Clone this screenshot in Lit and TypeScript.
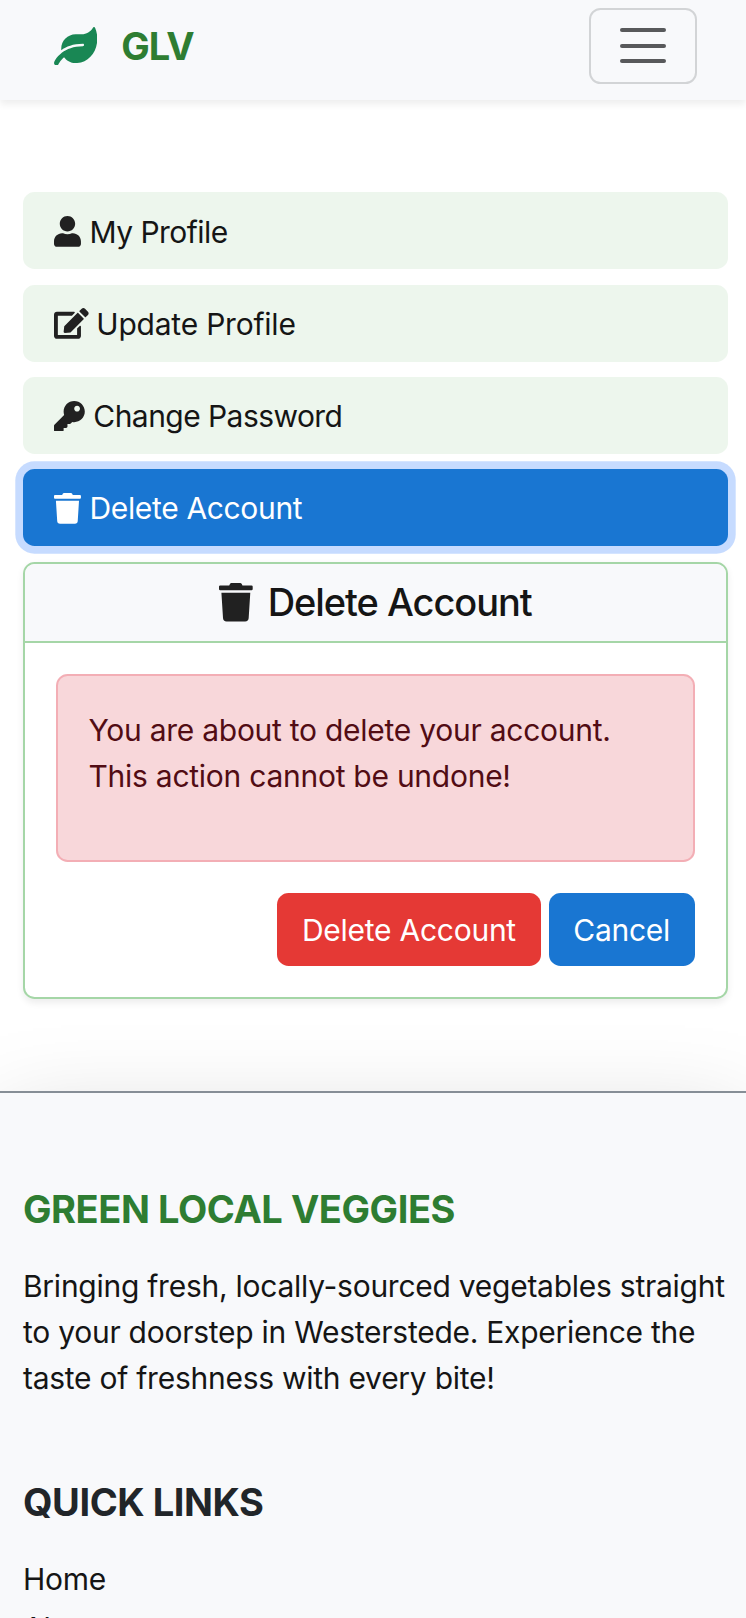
import { LitElement, html, css, svg } from "lit";
import { customElement } from "lit/decorators.js";

const ICONS: Record<string, { w: number; d: string }> = {
  leaf: {
    w: 576,
    d: "M546.2 9.7c-5.6-12.5-21.6-13-28.3-1.2C486.9 62.4 431.4 96 368 96h-80C182 96 96 182 96 288c0 7 .8 13.7 1.5 20.5C161.3 262.8 253.4 224 384 224c8.8 0 16 7.2 16 16s-7.2 16-16 16C132.6 256 26 410.1 2.4 468c-6.6 16.3 1.2 34.9 17.5 41.6 16.4 6.8 35-1.1 41.8-17.3 1.5-3.6 20.9-47.9 71.9-90.6 32.4 43.9 94 85.8 174.9 77.2C465.5 467.5 576 326.7 576 154.3c0-50.2-10.8-102.2-29.8-144.6z",
  },
  user: {
    w: 448,
    d: "M224 256c70.7 0 128-57.3 128-128S294.7 0 224 0 96 57.3 96 128s57.3 128 128 128zm89.6 32h-16.7c-22.2 10.2-46.9 16-72.9 16s-50.6-5.8-72.9-16h-16.7C60.2 288 0 348.2 0 422.4V464c0 26.5 21.5 48 48 48h352c26.5 0 48-21.5 48-48v-41.6c0-74.2-60.2-134.4-134.4-134.4z",
  },
  edit: {
    w: 576,
    d: "M402.6 83.2l90.2 90.2c3.8 3.8 3.8 10 0 13.8L274.4 405.6l-92.8 10.3c-12.4 1.4-22.9-9.1-21.5-21.5l10.3-92.8L388.8 83.2c3.8-3.8 10-3.8 13.8 0zm162-22.9l-48.8-48.8c-15.2-15.2-39.9-15.2-55.2 0l-35.4 35.4c-3.8 3.8-3.8 10 0 13.8l90.2 90.2c3.8 3.8 10 3.8 13.8 0l35.4-35.4c15.2-15.3 15.2-40 0-55.2zM384 346.2V448H64V128h229.8c3.2 0 6.2-1.3 8.5-3.5l40-40c7.6-7.6 2.2-20.5-8.5-20.5H48C21.5 64 0 85.5 0 112v352c0 26.5 21.5 48 48 48h352c26.5 0 48-21.5 48-48V306.2c0-10.7-12.9-16-20.5-8.5l-40 40c-2.2 2.3-3.5 5.3-3.5 8.5z",
  },
  key: {
    w: 512,
    d: "M512 176.001C512 273.203 433.202 352 336 352c-11.22 0-22.19-1.062-32.827-3.069l-24.012 27.014A23.999 23.999 0 0 1 261.223 384H224v40c0 13.255-10.745 24-24 24h-40v40c0 13.255-10.745 24-24 24H24c-13.255 0-24-10.745-24-24v-78.059c0-6.365 2.529-12.47 7.029-16.971l161.802-161.802C163.108 213.814 160 195.271 160 176 160 78.798 238.797.001 335.999 0 433.488-.001 512 78.511 512 176.001zM336 128c0 26.51 21.49 48 48 48s48-21.49 48-48-21.49-48-48-48-48 21.49-48 48z",
  },
  trash: {
    w: 448,
    d: "M432 32H312l-9.4-18.7A24 24 0 0 0 281.1 0H166.8a23.72 23.72 0 0 0-21.4 13.3L136 32H16A16 16 0 0 0 0 48v32a16 16 0 0 0 16 16h416a16 16 0 0 0 16-16V48a16 16 0 0 0-16-16zM53.2 467a48 48 0 0 0 47.9 45h245.8a48 48 0 0 0 47.9-45L416 128H32z",
  },
};

const icon = (name: string) => html`<svg
  class="icon"
  viewBox="0 0 ${ICONS[name].w} 512"
  aria-hidden="true"
>
  ${svg`<path fill="currentColor" d=${ICONS[name].d}></path>`}
</svg>`;

const MENU = [
  { icon: "user", label: "My Profile", cls: "profile" },
  { icon: "edit", label: "Update Profile", cls: "update" },
  { icon: "key", label: "Change Password", cls: "password" },
  { icon: "trash", label: "Delete Account", cls: "active" },
];

@customElement("app-root")
export class AppRoot extends LitElement {
  static styles = css`
    :host {
      display: block;
      height: 1618px;
      overflow: hidden;
      background: #fff;
      color: #151515;
      font-family: Inter, "Liberation Sans", sans-serif;
      font-size: 30px;
      line-height: 46.2px;
      letter-spacing: -0.26px;
    }
    * {
      box-sizing: border-box;
    }
    h2,
    h3,
    p,
    ul {
      margin: 0;
      padding: 0;
    }
    .icon {
      display: block;
      height: 30.8px;
      flex: none;
    }
    header {
      display: flex;
      justify-content: space-between;
      height: 100px;
      padding: 7.5px 49.3px 0 54px;
      background: #f8f9fb;
      box-shadow: 0 3.8px 7.7px rgba(0, 0, 0, 0.075);
    }
    .brand {
      display: flex;
      align-items: center;
      gap: 24px;
      height: 77px;
      color: #2e7d32;
      font-size: 38px;
      font-weight: 700;
      letter-spacing: -1.1px;
    }
    .brand .icon {
      height: 38.5px;
      color: #198754;
    }
    .toggler {
      display: flex;
      flex-direction: column;
      align-items: center;
      justify-content: center;
      gap: 11.6px;
      width: 107.5px;
      height: 76.5px;
      padding: 0;
      border: 2px solid #d2d4d6;
      border-radius: 11.5px;
      background: none;
    }
    .bar {
      width: 46px;
      height: 3.8px;
      border-radius: 2px;
      background: #58595b;
    }
    main {
      padding: 92.4px 18.5px 0 23.2px;
    }
    .menu {
      display: flex;
      flex-direction: column;
      gap: 15.3px;
    }
    .item {
      display: flex;
      align-items: center;
      gap: 8.5px;
      height: 77px;
      padding: 1px 30.8px 0;
      border-radius: 11.6px;
      background: #edf6ed;
    }
    .item .icon {
      color: #212121;
    }
    .profile {
      padding-top: 2px;
      letter-spacing: -0.52px;
    }
    .update {
      gap: 7.7px;
      letter-spacing: -0.22px;
    }
    .password {
      letter-spacing: -0.55px;
    }
    .item.active {
      background: #1976d2;
      color: #fff;
      letter-spacing: -0.34px;
      box-shadow: 0 0 0 7.7px #c6dbff;
    }
    .item.active .icon {
      color: #fff;
    }
    .card {
      height: 437px;
      margin-top: 15.6px;
      border: 2px solid #a5d6a7;
      border-radius: 11.6px;
      box-shadow: 0 3.8px 7.7px rgba(0, 0, 0, 0.075);
    }
    .title {
      display: flex;
      align-items: center;
      justify-content: center;
      gap: 15px;
      height: 79px;
      border-bottom: 2px solid #a5d6a7;
      border-radius: 10px 10px 0 0;
      background: #f8f9fb;
      font-size: 38px;
      font-weight: 500;
      letter-spacing: -1.05px;
    }
    .title .icon {
      height: 38.5px;
      color: #212121;
    }
    .body {
      padding: 31px 30.8px;
    }
    .alert {
      height: 188px;
      padding: 31px 30.5px;
      border: 2px solid #f3aeb5;
      border-radius: 11.6px;
      background: #f8d7da;
      color: #520c14;
    }
    .actions {
      display: flex;
      justify-content: flex-end;
      gap: 8px;
      margin-top: 31px;
    }
    .btn {
      display: flex;
      align-items: center;
      justify-content: center;
      height: 73px;
      padding: 2px 0 0;
      border: 0;
      border-radius: 11.6px;
      color: #fff;
      font: inherit;
      letter-spacing: -0.26px;
    }
    .danger {
      width: 263.5px;
      background: #e53935;
    }
    .primary {
      width: 146px;
      background: #1976d2;
    }
    footer {
      height: 540px;
      margin-top: 92px;
      padding: 93px 10px 0 23px;
      border-top: 2px solid #868e96;
      background: #f8f9fb;
      box-shadow: 0 31px 93px rgba(0, 0, 0, 0.175);
    }
    .heading {
      height: 46.2px;
      font-size: 38px;
      font-weight: 700;
      letter-spacing: -0.44px;
    }
    .green {
      color: #2e7d32;
    }
    .about {
      margin-top: 30.8px;
      line-height: 46px;
    }
    .line {
      display: block;
      white-space: nowrap;
    }
    .quick {
      margin-top: 78.4px;
      color: #212529;
    }
    .links {
      display: flex;
      flex-direction: column;
      gap: 2.4px;
      margin-top: 31px;
      list-style: none;
    }
  `;

  render() {
    return html`
      <header>
        <div class="brand">${icon("leaf")}<span>GLV</span></div>
        <button class="toggler" aria-label="Toggle navigation">
          <span class="bar"></span><span class="bar"></span
          ><span class="bar"></span>
        </button>
      </header>
      <main>
        <nav class="menu">
          ${MENU.map(
            (m) => html`<a class="item ${m.cls}"
              >${icon(m.icon)}<span>${m.label}</span></a
            >`
          )}
        </nav>
        <section class="card">
          <h2 class="title">${icon("trash")}<span>Delete Account</span></h2>
          <div class="body">
            <div class="alert">
              <span class="line">You are about to delete your account.</span>
              <span class="line">This action cannot be undone!</span>
            </div>
            <div class="actions">
              <button class="btn danger">Delete Account</button>
              <button class="btn primary">Cancel</button>
            </div>
          </div>
        </section>
      </main>
      <footer>
        <h3 class="heading green">GREEN LOCAL VEGGIES</h3>
        <p class="about">
          <span class="line">Bringing fresh, locally-sourced vegetables straight</span>
          <span class="line">to your doorstep in Westerstede. Experience the</span>
          <span class="line">taste of freshness with every bite!</span>
        </p>
        <h3 class="heading quick">QUICK LINKS</h3>
        <ul class="links">
          <li>Home</li>
          <li>About</li>
        </ul>
      </footer>
    `;
  }
}
